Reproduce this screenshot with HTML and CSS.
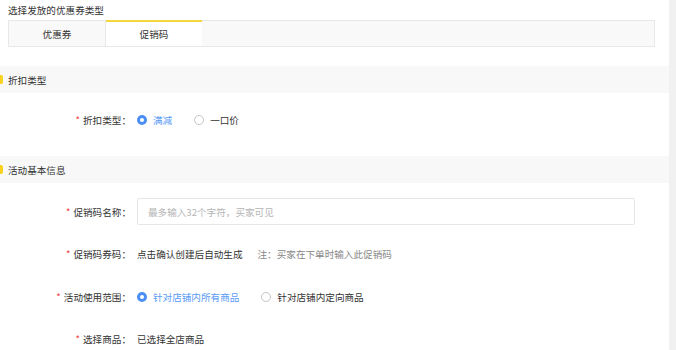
FILE: index.html
```html
<!DOCTYPE html>
<html lang="zh-CN">
<head>
<meta charset="utf-8">
<title>促销码</title>
<link rel="stylesheet" href="styles.css">
</head>
<body>
<div class="page">
  <main class="main">
    <div class="title">选择发放的优惠券类型</div>
    <div class="tabs">
      <div class="tab">优惠券</div>
      <div class="tab active">促销码</div>
    </div>

    <div class="section-head">折扣类型</div>
    <div class="section-body first">
      <div class="row">
        <div class="label"><span class="req">*</span>折扣类型：</div>
        <div class="field">
          <span class="radio checked"></span><span class="opt on">满减</span>
          <span class="radio"></span><span class="opt">一口价</span>
        </div>
      </div>
    </div>

    <div class="section-head">活动基本信息</div>
    <div class="section-body">
      <div class="row">
        <div class="label"><span class="req">*</span>促销码名称：</div>
        <div class="field grow">
          <input class="input" type="text" placeholder="最多输入32个字符，买家可见">
        </div>
      </div>
      <div class="row">
        <div class="label"><span class="req">*</span>促销码券码：</div>
        <div class="field">
          <span class="value">点击确认创建后自动生成</span>
          <span class="note">注：买家在下单时输入此促销码</span>
        </div>
      </div>
      <div class="row">
        <div class="label"><span class="req">*</span>活动使用范围：</div>
        <div class="field">
          <span class="radio checked"></span><span class="opt on">针对店铺内所有商品</span>
          <span class="radio"></span><span class="opt">针对店铺内定向商品</span>
        </div>
      </div>
      <div class="row">
        <div class="label"><span class="req">*</span>选择商品：</div>
        <div class="field">
          <span class="value">已选择全店商品</span>
        </div>
      </div>
    </div>
  </main>
  <aside class="scroll"></aside>
</div>
</body>
</html>
```
FILE: styles.css
```css
* { box-sizing: border-box; }
html, body { margin: 0; padding: 0; }
body {
  font-family: "Noto Sans CJK SC", "Noto Sans", sans-serif;
  font-size: 9.6px;
  color: #333;
  background: #fff;
  overflow: hidden;
}
.page {
  display: flex;
  width: 676px;
  height: 350px;
}
.main {
  flex: 1;
  min-width: 0;
}
.scroll {
  width: 7px;
  background: #f1f1f1;
}
.title {
  height: 20px;
  line-height: 20px;
  padding-left: 8px;
  color: #333;
}
.tabs {
  display: flex;
  height: 27px;
  margin: 0 14px 19px 8px;
  background: #f9f9f9;
  border: 1px solid #e8e8e8;
}
.tab {
  width: 97px;
  display: flex;
  align-items: center;
  justify-content: center;
  border-right: 1px solid #e8e8e8;
}
.tab.active {
  width: 96px;
  background: #fff;
  border-right: none;
  border-top: 2px solid #f5d63d;
  margin-top: -1px;
}
.section-head {
  height: 27px;
  background: #f8f8f8;
  display: flex;
  align-items: center;
  padding-left: 8px;
  position: relative;
}
.section-head::before {
  content: "";
  position: absolute;
  left: 0;
  top: 9px;
  width: 3px;
  height: 9px;
  border-radius: 0 2px 2px 0;
  background: #f8d21c;
}
.section-body {
  display: flex;
  flex-direction: column;
  gap: 15.5px;
  padding: 15px 0 0;
}
.section-body.first {
  padding: 13.5px 0 22.5px;
}
.row {
  display: flex;
  align-items: center;
  height: 27px;
}
.label {
  width: 131px;
  text-align: right;
  flex-shrink: 0;
  padding-right: 0;
}
.req {
  color: #f04545;
  margin-right: 3px;
}
.field {
  display: flex;
  align-items: center;
  margin-left: 6px;
}
.field.grow {
  flex: 1;
  margin-right: 34px;
}
.radio {
  width: 10px;
  height: 10px;
  border-radius: 50%;
  border: 1px solid #c4c4c4;
  background: #fff;
  margin-right: 6px;
  flex-shrink: 0;
}
.radio.checked {
  border: 3px solid #4b8ff5;
  background: #fff;
}
.opt { margin-right: 22px; }
.opt.on { color: #5a9bf6; }
.input {
  width: 100%;
  height: 27px;
  border: 1px solid #e6e6e6;
  border-radius: 2px;
  padding: 0 10px;
  font: inherit;
  color: #333;
  outline: none;
}
.input::placeholder { color: #b5b5b5; }
.note {
  color: #888;
  margin-left: 15px;
}
```
